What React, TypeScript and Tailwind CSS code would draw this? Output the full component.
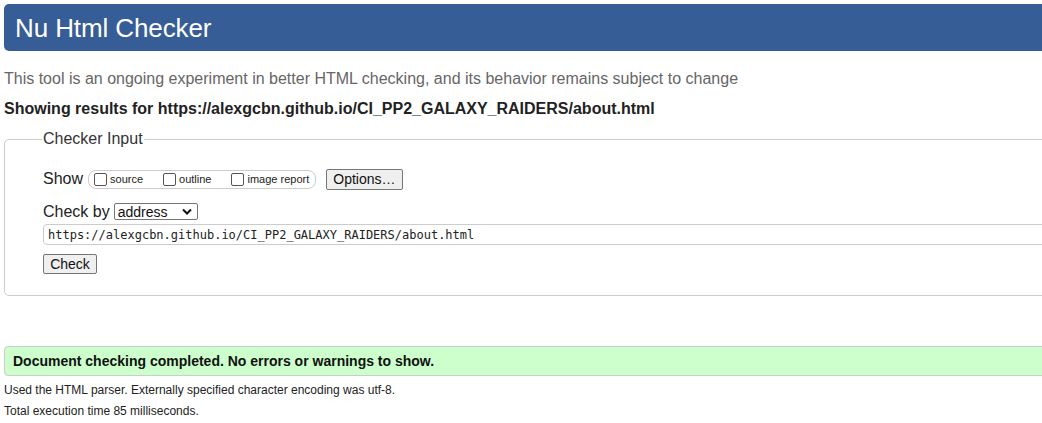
import React from "react";

const arial = { fontFamily: '"Liberation Sans", Arial, sans-serif' };

function Box({ label, className }: { label: string; className?: string }) {
  return (
    <label className={"flex items-center " + (className ?? "")}>
      <span className="inline-block w-[13px] h-[13px] border border-[#555] rounded-[2px] bg-white mr-[3px]" />
      <span className="text-[11px] text-[#222] leading-none">{label}</span>
    </label>
  );
}

export default function App() {
  return (
    <div className="w-[1042px] h-[423px] overflow-hidden bg-white" style={arial}>
      <div className="w-[1100px] pl-[4px] pt-[4px] font-['Liberation_Sans',Arial,sans-serif]">
        <div className="h-[47px] bg-[#365d95] rounded-[5px] flex items-center pl-[11px]">
          <h1 className="text-white text-[26px] leading-none font-normal tracking-[-0.1px]">Nu Html Checker</h1>
        </div>
        <p className="mt-[19px] text-[16px] leading-[18px] text-[#666]">
          This tool is an ongoing experiment in better HTML checking, and its behavior remains subject to change
        </p>
        <p className="mt-[12px] text-[16px] leading-[18px] font-bold text-[#222]">
          Showing results for https://alexgcbn.github.io/CI_PP2_GALAXY_RAIDERS/about.html
        </p>
        <fieldset className="mt-[12px] border border-[#ccc] rounded-[5px] h-[166px] pl-[38px] pr-0">
          <legend className="text-[16px] leading-[18px] text-[#333] px-[1px] -ml-[1px]">Checker Input</legend>
          <div className="mt-[20px] flex items-center h-[22px]">
            <span className="text-[16px] text-[#222] mr-[5px]">Show</span>
            <div className="flex items-center h-[19px] border border-[#ccc] rounded-[8px] pl-[5px] pr-[6px]">
              <Box label="source" className="mr-[20px]" />
              <Box label="outline" className="mr-[20px]" />
              <Box label="image report" />
            </div>
            <button className="ml-[10px] h-[21px] px-[6px] border border-[#767676] rounded-[2px] bg-[#efefef] text-[14px] text-[#111] leading-none">
              Options…
            </button>
          </div>
          <div className="mt-[12px] flex items-center h-[19px]">
            <span className="text-[16px] text-[#222] mr-[4px]">Check by</span>
            <div className="relative w-[84px] h-[17px] border border-[#767676] rounded-[2px] bg-white flex items-center pl-[3px]">
              <span className="text-[14px] text-[#111] leading-none">address</span>
              <svg className="absolute right-[5px] top-[4px]" width="10" height="7" viewBox="0 0 10 7">
                <path d="M1 1.5 L5 5.5 L9 1.5" stroke="#111" strokeWidth="2" fill="none" />
              </svg>
            </div>
          </div>
          <div className="mt-[3px] h-[21px] border border-[#ccc] rounded-[4px] flex items-center pl-[4px]">
            <span className="text-[12px] text-[#222] leading-none" style={{ fontFamily: '"DejaVu Sans Mono", monospace' }}>
              https://alexgcbn.github.io/CI_PP2_GALAXY_RAIDERS/about.html
            </span>
          </div>
          <button className="mt-[9px] w-[54px] h-[20px] border border-[#767676] rounded-[2px] bg-[#efefef] text-[14px] text-[#111] leading-none">
            Check
          </button>
        </fieldset>
        <div className="mt-[50px] h-[30px] border border-[#ccc] rounded-[4px] bg-[#ccffcc] flex items-center pl-[8px]">
          <span className="text-[14px] font-bold text-[#111]">Document checking completed. No errors or warnings to show.</span>
        </div>
        <p className="mt-[7px] text-[12px] leading-[14px] text-[#222]">
          Used the HTML parser. Externally specified character encoding was utf-8.
        </p>
        <p className="mt-[7px] text-[12px] leading-[14px] text-[#222]">Total execution time 85 milliseconds.</p>
      </div>
    </div>
  );
}
